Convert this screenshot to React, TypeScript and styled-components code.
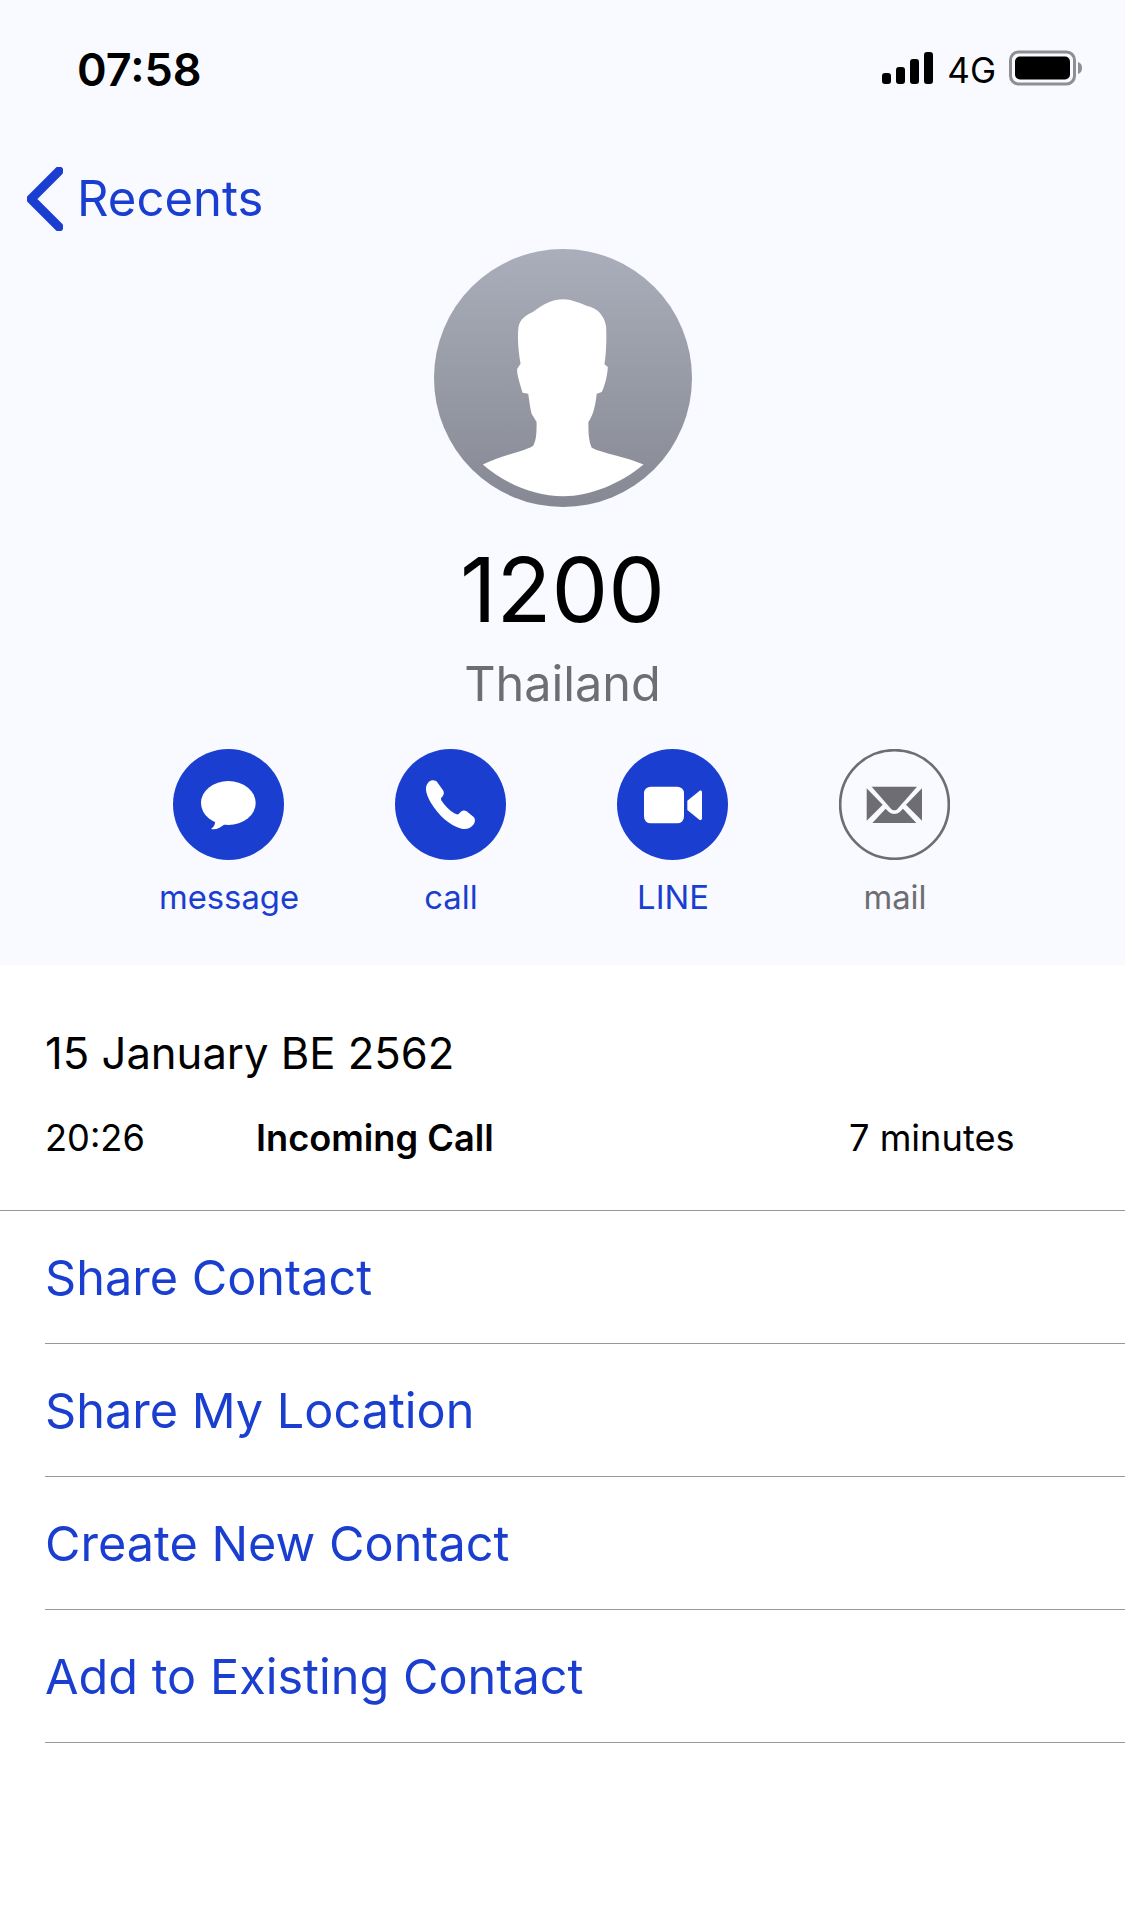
import styled, { createGlobalStyle } from "styled-components";

const BLUE = "#1a3fd0";
const GREY = "#6d6d72";
const LINE = "#98989b";

const GlobalStyle = createGlobalStyle`
  html, body {
    margin: 0;
    background: #ffffff;
    font-family: "Inter", "Liberation Sans", sans-serif;
  }
`;

const Page = styled.div`
  width: 1125px;
  height: 1920px;
  background: #ffffff;
  overflow: hidden;
`;

const Header = styled.header`
  height: 965px;
  background: #f9faff;
  display: flex;
  flex-direction: column;
`;

const StatusBar = styled.div`
  height: 136px;
  display: flex;
  align-items: center;
  justify-content: space-between;
  padding: 0 42px 0 77px;
`;

const Time = styled.span`
  margin-top: 2px;
  font-size: 45px;
  font-weight: 600;
  color: #000;
`;

const StatusRight = styled.div`
  display: flex;
  align-items: center;
  gap: 13px;
`;

const Network = styled.span`
  margin-top: 3px;
  font-size: 35px;
  color: #000;
`;

const Nav = styled.div`
  height: 101px;
  margin-top: 12px;
  display: flex;
  align-items: center;
  gap: 14px;
  padding-left: 27px;
`;

const BackLabel = styled.span`
  font-size: 49px;
  color: ${BLUE};
`;

const Avatar = styled.svg`
  display: block;
  width: 258px;
  height: 258px;
  align-self: center;
`;

const Name = styled.h1`
  margin: 25px 0 0;
  height: 116px;
  line-height: 116px;
  font-size: 90px;
  font-weight: 400;
  color: #000;
  text-align: center;
`;

const Region = styled.div`
  margin-top: 5px;
  height: 62px;
  line-height: 62px;
  font-size: 48.6px;
  color: ${GREY};
  text-align: center;
`;

const Actions = styled.div`
  margin-top: 34px;
  padding-left: 117px;
  display: grid;
  grid-template-columns: repeat(4, 222px);
`;

const Action = styled.div`
  display: flex;
  flex-direction: column;
  align-items: center;
`;

const ActionIcon = styled.svg`
  display: block;
  width: 111px;
  height: 111px;
`;

const ActionLabel = styled.span<{ $muted?: boolean }>`
  margin-top: 17px;
  padding-left: 2px;
  height: 40px;
  line-height: 40px;
  font-size: 32.8px;
  color: ${(p) => (p.$muted ? GREY : BLUE)};
`;

const CallInfo = styled.section`
  height: 246px;
  box-sizing: border-box;
  padding: 59px 0 0 45px;
  border-bottom: 1px solid ${LINE};
`;

const CallDate = styled.div`
  height: 60px;
  line-height: 60px;
  font-size: 43.6px;
  color: #000;
`;

const CallRow = styled.div`
  margin-top: 30px;
  height: 48px;
  line-height: 48px;
  font-size: 36.2px;
  color: #000;
  display: grid;
  grid-template-columns: 211px 593px auto;
`;

const CallType = styled.span`
  font-weight: 600;
`;

const ActionList = styled.ul`
  list-style: none;
  margin: 0;
  padding: 0 0 0 45px;
`;

const ActionItem = styled.li`
  height: 133px;
  box-sizing: border-box;
  line-height: 133px;
  font-size: 48.6px;
  color: ${BLUE};
  border-bottom: 1px solid ${LINE};
`;

const Silhouette = "M189 672 C240 645 330 628 340 615 C350 600 350 570 350 545 L335 520 C330 500 328 480 325 460 L308 457 C300 430 290 400 292 385 L302 370 C295 330 292 290 296 260 C300 235 320 225 340 215 C370 190 400 177 430 177 C460 178 480 190 510 200 C540 210 555 235 558 260 C560 300 558 340 553 372 L563 380 C562 410 552 440 545 455 L530 460 C526 490 522 520 505 545 C505 570 505 600 515 622 C550 640 620 650 670 672 C600 730 510 767 430 767 C340 767 250 725 189 672 Z";

export default function App() {
  return (
    <Page>
      <GlobalStyle />
      <Header>
        <StatusBar>
          <Time>07:58</Time>
          <StatusRight>
            <svg width="52" height="32" viewBox="0 0 52 32">
              <rect x="0" y="21" width="9" height="11" rx="3" fill="#000" />
              <rect x="14" y="15" width="9" height="17" rx="3" fill="#000" />
              <rect x="28" y="7" width="9" height="25" rx="3" fill="#000" />
              <rect x="42" y="0" width="9" height="32" rx="3" fill="#000" />
            </svg>
            <Network>4G</Network>
            <svg width="74" height="36" viewBox="0 0 74 36">
              <rect x="1.5" y="2" width="64" height="32" rx="8" fill="none" stroke="#8e8e93" strokeWidth="3" />
              <rect x="6" y="6.5" width="55" height="23" rx="5" fill="#000" />
              <path d="M69 12 C72 13 73 15 73 18 C73 21 72 23 69 24 Z" fill="#8e8e93" />
            </svg>
          </StatusRight>
        </StatusBar>
        <Nav>
          <svg width="36" height="64" viewBox="0 0 36 64">
            <path d="M32 4 L4 32 L32 60" fill="none" stroke={BLUE} strokeWidth="9" strokeLinecap="round" strokeLinejoin="round" />
          </svg>
          <BackLabel>Recents</BackLabel>
        </Nav>
        <Avatar viewBox="43 27 772 772">
          <defs>
            <linearGradient id="avatarFill" x1="0" y1="0" x2="0" y2="1">
              <stop offset="0" stopColor="#aaaeba" />
              <stop offset="1" stopColor="#868993" />
            </linearGradient>
          </defs>
          <circle cx="429" cy="413" r="386" fill="url(#avatarFill)" />
          <path d={Silhouette} fill="#fff" />
        </Avatar>
        <Name>1200</Name>
        <Region>Thailand</Region>
        <Actions>
          <Action>
            <ActionIcon viewBox="69 57 333 333">
              <circle cx="235.5" cy="223.5" r="166.5" fill={BLUE} />
              <ellipse cx="235" cy="219" rx="82" ry="66" fill="#fff" />
              <path d="M195 270 C197 282 192 291 183 297 C198 301 212 292 225 282 Z" fill="#fff" />
            </ActionIcon>
            <ActionLabel>message</ActionLabel>
          </Action>
          <Action>
            <ActionIcon viewBox="735 57 333 333">
              <circle cx="901.5" cy="223.5" r="166.5" fill={BLUE} />
              <path d="M836 156 C845 148 857 150 863 158 L880 182 C884 190 880 197 874 203 C872 206 873 210 876 214 C888 232 905 248 920 253 C925 254 928 250 932 246 C937 241 944 240 950 244 L970 260 C977 266 976 276 970 284 C962 294 950 299 935 296 C900 288 865 255 845 222 C830 197 820 172 836 156 Z" fill="#fff" />
            </ActionIcon>
            <ActionLabel>call</ActionLabel>
          </Action>
          <Action>
            <ActionIcon viewBox="51 57 333 333">
              <circle cx="217.5" cy="223.5" r="166.5" fill={BLUE} />
              <rect x="132" y="170" width="120" height="110" rx="20" fill="#fff" />
              <path d="M262 212 L298 183 C302 180 306 182 306 187 L306 265 C306 270 302 272 298 269 L262 240 Z" fill="#fff" />
            </ActionIcon>
            <ActionLabel>LINE</ActionLabel>
          </Action>
          <Action>
            <ActionIcon viewBox="717 57 333 333">
              <circle cx="883.5" cy="223.5" r="163" fill="none" stroke={GREY} strokeWidth="8" />
              <path d="M815 170 L951 170 L893 236 C887 242 879 242 873 236 Z" fill={GREY} />
              <path d="M800 175 L848 224 L800 272 Z" fill={GREY} />
              <path d="M966 175 L918 224 L966 272 Z" fill={GREY} />
              <path d="M817 279 L857 236 L866 245 C877 254 889 254 900 245 L909 236 L949 279 Z" fill={GREY} />
            </ActionIcon>
            <ActionLabel $muted>mail</ActionLabel>
          </Action>
        </Actions>
      </Header>
      <CallInfo>
        <CallDate>15 January BE 2562</CallDate>
        <CallRow>
          <span>20:26</span>
          <CallType>Incoming Call</CallType>
          <span>7 minutes</span>
        </CallRow>
      </CallInfo>
      <ActionList>
        <ActionItem>Share Contact</ActionItem>
        <ActionItem>Share My Location</ActionItem>
        <ActionItem>Create New Contact</ActionItem>
        <ActionItem>Add to Existing Contact</ActionItem>
      </ActionList>
    </Page>
  );
}
